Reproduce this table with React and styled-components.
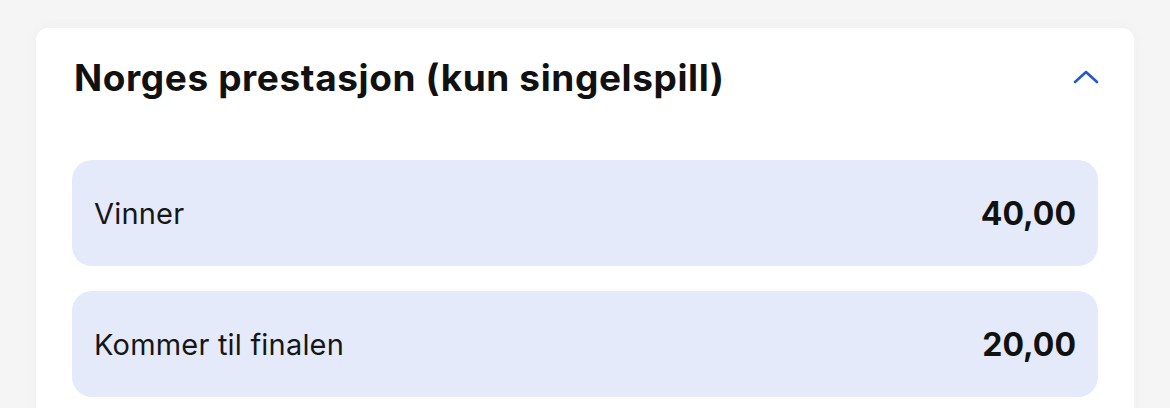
import React from "react";
import styled, { createGlobalStyle } from "styled-components";

const Global = createGlobalStyle`
  html, body { margin: 0; padding: 0; background: #f5f5f5; }
  body { font-family: Inter, "Noto Sans", sans-serif; -webkit-font-smoothing: antialiased; }
`;

const Page = styled.div`
  width: 1170px;
  height: 408px;
  overflow: hidden;
  padding: 28px 36px 0 36px;
  box-sizing: border-box;
  background: #f5f5f5;
`;

const Card = styled.section`
  background: #fff;
  border-radius: 12px;
  box-shadow: 0 0 16px rgba(0, 0, 0, 0.03);
  padding: 0 36px 0 36px;
  height: 420px;
  box-sizing: border-box;
`;

const Header = styled.div`
  display: flex;
  align-items: center;
  justify-content: space-between;
  height: 98px;
  padding-left: 2px;
`;

const Title = styled.h2`
  margin: 0;
  font-size: 37px;
  font-weight: 700;
  color: #111;
  letter-spacing: 0.6px;
`;

const Toggle = styled.button`
  border: 0;
  background: transparent;
  padding: 0;
  display: flex;
  width: 28px;
  height: 28px;
  align-items: center;
  justify-content: center;
  margin-right: -2px;
`;

const List = styled.div`
  display: flex;
  flex-direction: column;
  gap: 25px;
  padding-top: 34px;
`;

const Row = styled.div`
  display: flex;
  align-items: center;
  justify-content: space-between;
  height: 106px;
  padding: 0 22px;
  border-radius: 20px;
  background: #e5eafb;
`;

const Label = styled.span`
  font-size: 29px;
  color: #161616;
  letter-spacing: 0.2px;
`;

const Value = styled.span`
  font-size: 32px;
  font-weight: 700;
  color: #111;
`;

const rows = [
  { label: "Vinner", value: "40,00" },
  { label: "Kommer til finalen", value: "20,00" },
];

export default function App() {
  return (
    <>
      <Global />
      <Page>
        <Card>
          <Header>
            <Title>Norges prestasjon (kun singelspill)</Title>
            <Toggle aria-label="Skjul">
              <svg width="26" height="16" viewBox="0 0 26 16">
                <path d="M2 13 L13 3 L24 13" fill="none" stroke="#2456d6" strokeWidth="2.6" strokeLinecap="round" strokeLinejoin="round" />
              </svg>
            </Toggle>
          </Header>
          <List>
            {rows.map((r) => (
              <Row key={r.label}>
                <Label>{r.label}</Label>
                <Value>{r.value}</Value>
              </Row>
            ))}
          </List>
        </Card>
      </Page>
    </>
  );
}
